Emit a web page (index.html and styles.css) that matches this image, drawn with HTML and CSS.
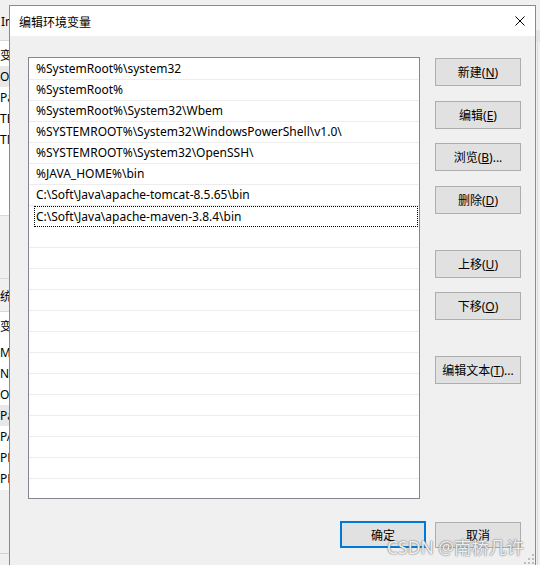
FILE: index.html
```html
<!DOCTYPE html>
<html lang="zh-CN">
<head>
<meta charset="utf-8">
<title>编辑环境变量</title>
<link rel="stylesheet" href="styles.css">
</head>
<body>
<div class="desktop">
  <div class="bg-left">
    <div class="bl-title">Im</div>
    <div class="bl-list bl-list1">
      <div class="bl-head">变</div>
      <div class="bl-row bl-sel">Or</div>
      <div class="bl-row">Pa</div>
      <div class="bl-row">TE</div>
      <div class="bl-row">TM</div>
    </div>
    <div class="bl-gap"></div>
    <div class="bl-group">统</div>
    <div class="bl-list bl-list2">
      <div class="bl-head bl-head2">变</div>
      <div class="bl-row">M</div>
      <div class="bl-row">N</div>
      <div class="bl-row">O</div>
      <div class="bl-row bl-sel">Pa</div>
      <div class="bl-row">PA</div>
      <div class="bl-row">PR</div>
      <div class="bl-row">PR</div>
    </div>
    <div class="bl-foot"></div>
  </div>
  <div class="bg-right">
    <div class="br-top"></div>
    <div class="br-band"></div>
    <div class="br-body"></div>
  </div>

  <div class="dialog">
    <div class="titlebar">
      <span class="title">编辑环境变量</span>
      <span class="close">
        <svg width="10" height="10" viewBox="0 0 10 10"><path d="M0.5 0.5 L9.5 9.5 M9.5 0.5 L0.5 9.5" stroke="#000" stroke-width="1" fill="none"/></svg>
      </span>
    </div>
    <div class="content">
      <div class="main">
        <ul class="list">
          <li class="row">%SystemRoot%\system32</li>
          <li class="row">%SystemRoot%</li>
          <li class="row">%SystemRoot%\System32\Wbem</li>
          <li class="row">%SYSTEMROOT%\System32\WindowsPowerShell\v1.0\</li>
          <li class="row">%SYSTEMROOT%\System32\OpenSSH\</li>
          <li class="row">%JAVA_HOME%\bin</li>
          <li class="row">C:\Soft\Java\apache-tomcat-8.5.65\bin</li>
          <li class="row row-focus"><div class="focus-box">C:\Soft\Java\apache-maven-3.8.4\bin</div></li>
          <li class="row"></li>
          <li class="row"></li>
          <li class="row"></li>
          <li class="row"></li>
          <li class="row"></li>
          <li class="row"></li>
          <li class="row"></li>
          <li class="row"></li>
          <li class="row"></li>
          <li class="row"></li>
          <li class="row"></li>
          <li class="row"></li>
          <li class="row"></li>
        </ul>
        <div class="side">
          <div class="btn m1">新建(<u>N</u>)</div>
          <div class="btn m15">编辑(<u>E</u>)</div>
          <div class="btn m14">浏览(<u>B</u>)...</div>
          <div class="btn m15">删除(<u>D</u>)</div>
          <div class="btn m36">上移(<u>U</u>)</div>
          <div class="btn m14">下移(<u>O</u>)</div>
          <div class="btn m36">编辑文本(<u>T</u>)...</div>
        </div>
      </div>
      <div class="footer">
        <div class="btn btn-default">确定</div>
        <div class="btn btn-cancel">取消</div>
      </div>
    </div>
    <svg class="grip" width="10" height="10" viewBox="0 0 10 10">
      <rect x="8" y="0" width="2" height="2" fill="#bdbdbd"/>
      <rect x="8" y="4" width="2" height="2" fill="#bdbdbd"/>
      <rect x="4" y="4" width="2" height="2" fill="#bdbdbd"/>
      <rect x="8" y="8" width="2" height="2" fill="#bdbdbd"/>
      <rect x="4" y="8" width="2" height="2" fill="#bdbdbd"/>
      <rect x="0" y="8" width="2" height="2" fill="#bdbdbd"/>
    </svg>
  </div>

  <div class="watermark">CSDN @南桥几许</div>
</div>
</body>
</html>
```

FILE: styles.css
```css
* {
  box-sizing: border-box;
  margin: 0;
  padding: 0;
}

html, body {
  width: 540px;
  height: 565px;
  overflow: hidden;
}

body {
  font-family: "Noto Sans", "Noto Sans CJK SC", sans-serif;
  font-size: 12px;
  color: #000;
  background: #f0f0f0;
}

.desktop {
  position: relative;
  width: 540px;
  height: 565px;
  overflow: hidden;
  background: #f0f0f0;
}

/* ---- window behind, left edge ---- */
.bg-left {
  position: absolute;
  left: 0;
  top: 0;
  width: 9px;
  height: 565px;
  overflow: hidden;
  background: #f0f0f0;
  white-space: nowrap;
  font-family: "Noto Sans", "Noto Sans CJK SC", sans-serif;
  font-size: 12px;
}

.bl-title {
  height: 41px;
  padding-top: 13px;
  line-height: 18px;
  border-bottom: 1px solid #d9d9d9;
  padding-left: 1px;
}

.bl-list {
  background: #fff;
}

.bl-list1 {
  height: 175px;
  padding-top: 4px;
  border-bottom: 1px solid #d9d9d9;
}

.bl-head {
  height: 21px;
  line-height: 21px;
}

.bl-head2 {
  height: 26px;
  padding-top: 1px;
  line-height: 20px;
}

.bl-row {
  height: 21px;
  line-height: 21px;
}

.bl-sel {
  background: #e8e8e8;
}

.bl-gap {
  height: 63px;
  border-bottom: 1px solid #d9d9d9;
}

.bl-group {
  height: 33px;
  padding-top: 4px;
  line-height: 28px;
  border-bottom: 1px solid #d9d9d9;
}

.bl-list2 {
  height: 178px;
  padding-top: 4px;
}

.bl-foot {
  height: 64px;
  border-bottom: 1px solid #d4d4d4;
}

/* ---- window behind, right edge ---- */
.bg-right {
  position: absolute;
  left: 536px;
  top: 0;
  width: 4px;
  height: 565px;
  background: #f0f0f0;
}

.br-top {
  height: 30px;
}

.br-band {
  height: 12px;
  background: #e3e3e3;
}

.br-body {
  height: 523px;
  margin-left: 1px;
  border-left: 1px solid #dcdcdc;
}

/* ---- dialog ---- */
.dialog {
  position: absolute;
  left: 9px;
  top: 5px;
  width: 527px;
  height: 561px;
  border: 1px solid #8a8a8a;
  background: #f0f0f0;
  display: flex;
  flex-direction: column;
}

.titlebar {
  flex: none;
  height: 30px;
  background: #fff;
  display: flex;
  align-items: center;
  justify-content: space-between;
}

.title {
  padding-left: 9px;
  padding-top: 2px;
  font-family: "Noto Sans CJK SC", sans-serif;
  font-size: 12px;
  line-height: 16px;
}

.close {
  width: 30px;
  height: 30px;
  display: flex;
  align-items: center;
  justify-content: center;
}

.close svg {
  display: block;
}

.content {
  padding: 21px 14px 0 18px;
}

.main {
  display: flex;
  align-items: flex-start;
}

.list {
  list-style: none;
  width: 392px;
  height: 442px;
  border: 1px solid #828790;
  background: #fff;
  padding-top: 1px;
  overflow: hidden;
}

.row {
  height: 21px;
  border-bottom: 1px solid #ededed;
  padding-left: 7px;
  line-height: 20px;
  white-space: nowrap;
}

.row-focus {
  border-bottom: none;
  padding-left: 0;
}

.focus-box {
  margin: 0 1px 0 5px;
  height: 21px;
  border: 1px dotted #000;
  padding-left: 1px;
  line-height: 19px;
}

.side {
  margin-left: 15px;
  width: 86px;
  display: flex;
  flex-direction: column;
}

.btn {
  width: 86px;
  height: 28px;
  border: 1px solid #adadad;
  background: #e1e1e1;
  display: flex;
  align-items: center;
  justify-content: center;
  font-family: "Noto Sans", "Noto Sans CJK SC", sans-serif;
  font-size: 12px;
  color: #000;
  white-space: nowrap;
}

.btn u {
  text-decoration: underline;
  text-underline-offset: 1px;
}

.m1 { margin-top: 1px; }
.m14 { margin-top: 14px; }
.m15 { margin-top: 15px; }
.m36 { margin-top: 36px; }

.footer {
  margin-top: 22px;
  display: flex;
  justify-content: flex-end;
  align-items: flex-end;
  gap: 9px;
}

.btn-default {
  height: 27px;
  border: 2px solid #0078d7;
}

.btn-cancel {
  height: 26px;
}

.grip {
  position: absolute;
  right: 1px;
  bottom: 1px;
  display: block;
}

.watermark {
  position: absolute;
  left: 387px;
  top: 536px;
  font-family: "Noto Sans", "Noto Sans CJK SC", sans-serif;
  font-size: 17.5px;
  line-height: 22px;
  color: rgba(255, 255, 255, 0.9);
  text-shadow: 0 0 2px #6f6f6f, 0 0 1px #8a8a8a;
  white-space: nowrap;
}
```
